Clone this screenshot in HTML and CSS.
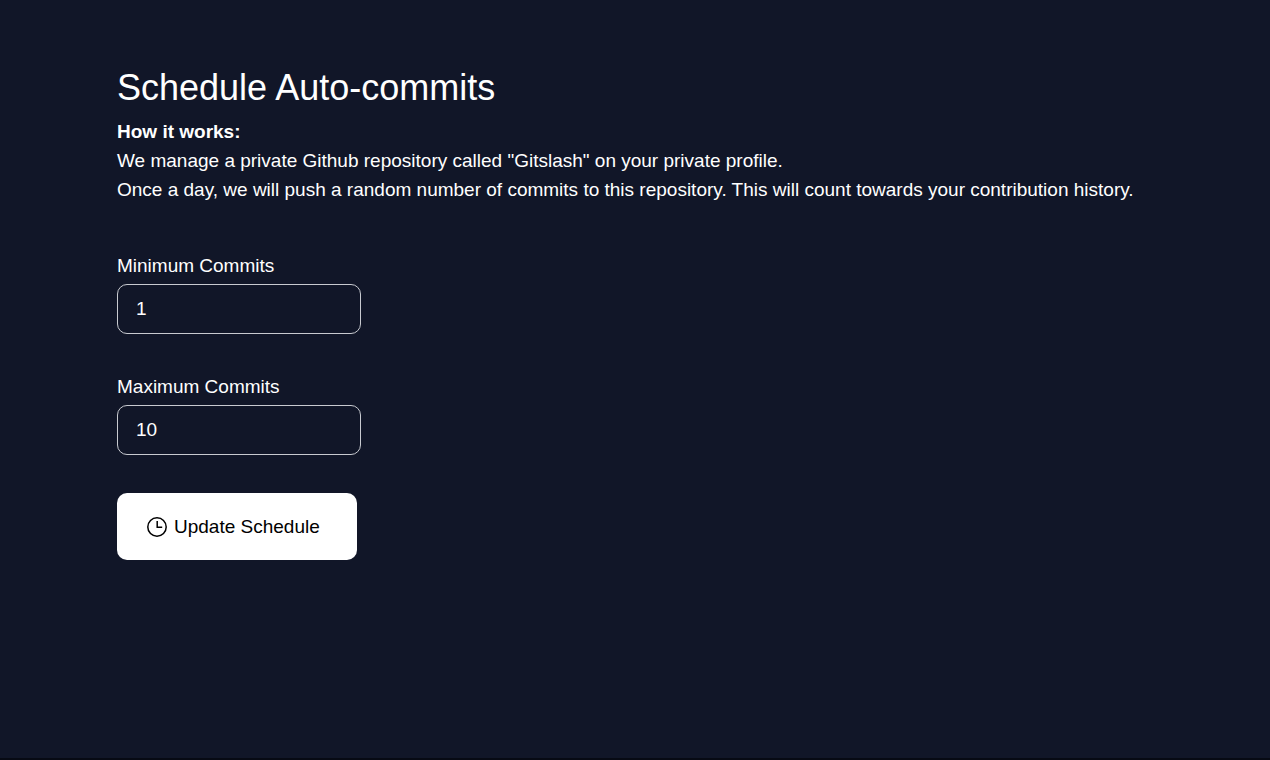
FILE: index.html
```html
<!DOCTYPE html>
<html lang="en">
<head>
  <meta charset="UTF-8">
  <meta name="viewport" content="width=device-width, initial-scale=1.0">
  <title>Schedule Auto-commits</title>
  <link rel="stylesheet" href="styles.css">
</head>
<body>

  <main class="schedule">
    <h1 class="title">Schedule Auto-commits</h1>
    <p class="intro">
      <strong>How it works:</strong><br>
      We manage a private Github repository called "Gitslash" on your private profile.<br>
      Once a day, we will push a random number of commits to this repository. This will count towards your contribution history.
    </p>

    <form class="schedule-form">
      <div class="field">
        <label for="min-commits">Minimum Commits</label>
        <input type="number" id="min-commits" name="min" value="1">
      </div>

      <div class="field">
        <label for="max-commits">Maximum Commits</label>
        <input type="number" id="max-commits" name="max" value="10">
      </div>

      <button type="submit" class="update-btn">
        <svg class="icon" viewBox="0 0 20 20" fill="none" stroke="currentColor" stroke-width="1.5" aria-hidden="true">
          <circle cx="10" cy="10" r="9.200"></circle>
          <path d="M10.200 4v6.200h5"></path>
        </svg>
        Update Schedule
      </button>
    </form>
  </main>

</body>
</html>
```

FILE: styles.css
```css
* {
  box-sizing: border-box;
}

body {
  margin: 0;
  min-height: 100vh;
  font-family: "Liberation Sans", Arial, sans-serif;
  font-size: 19px;
  line-height: 29px;
  color: #fff;
  background-color: #111628;
  border-bottom: 2px solid #070a14;
}

.schedule {
  padding: 64px 117px;
}

.title {
  margin: 0 0 5px;
  font-size: 36px;
  font-weight: 400;
  line-height: 48px;
}

.intro {
  margin: 0;
}

.schedule-form {
  display: flex;
  flex-direction: column;
  align-items: flex-start;
  gap: 38px;
  margin-top: 47px;
}

.field {
  display: flex;
  flex-direction: column;
  gap: 4px;
}

.field input {
  width: 244px;
  height: 50px;
  padding: 0 18px;
  font: inherit;
  color: inherit;
  background: transparent;
  border: 1px solid #c8cad0;
  border-radius: 10px;
}

.update-btn {
  display: flex;
  align-items: center;
  gap: 7px;
  height: 67px;
  padding: 0 37px 0 30px;
  font: inherit;
  color: #000;
  background-color: #fff;
  border: none;
  border-radius: 10px;
  cursor: pointer;
}

.icon {
  width: 20px;
  height: 20px;
}
```
